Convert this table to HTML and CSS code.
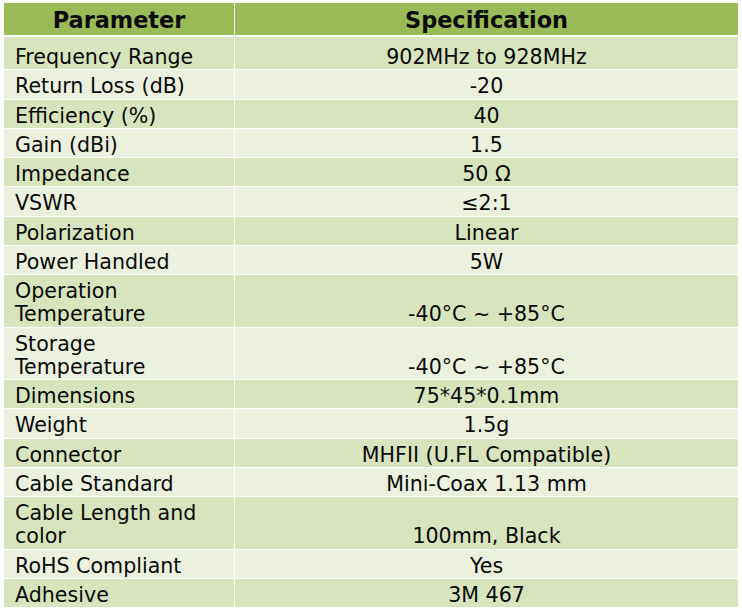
FILE: index.html
```html
<!DOCTYPE html>
<html>
<head>
<meta charset="utf-8">
<link rel="stylesheet" href="styles.css">
</head>
<body>
<table class="spec">
  <thead>
    <tr><th class="col-param">Parameter</th><th class="col-spec">Specification</th></tr>
  </thead>
  <tbody>
    <tr class="first"><td>Frequency Range</td><td>902MHz to 928MHz</td></tr>
    <tr><td>Return Loss (dB)</td><td>-20</td></tr>
    <tr><td>Efficiency (%)</td><td>40</td></tr>
    <tr><td>Gain (dBi)</td><td>1.5</td></tr>
    <tr><td>Impedance</td><td>50 Ω</td></tr>
    <tr><td>VSWR</td><td>≤2:1</td></tr>
    <tr><td>Polarization</td><td>Linear</td></tr>
    <tr><td>Power Handled</td><td>5W</td></tr>
    <tr><td>Operation<br>Temperature</td><td>-40°C ~ +85°C</td></tr>
    <tr><td>Storage<br>Temperature</td><td>-40°C ~ +85°C</td></tr>
    <tr><td>Dimensions</td><td>75*45*0.1mm</td></tr>
    <tr><td>Weight</td><td>1.5g</td></tr>
    <tr><td>Connector</td><td>MHFII (U.FL Compatible)</td></tr>
    <tr><td>Cable Standard</td><td>Mini-Coax 1.13 mm</td></tr>
    <tr><td>Cable Length and<br>color</td><td>100mm, Black</td></tr>
    <tr><td>RoHS Compliant</td><td>Yes</td></tr>
    <tr><td>Adhesive</td><td>3M 467</td></tr>
  </tbody>
</table>
</body>
</html>
```
FILE: styles.css
```css
html, body {
  background: #ffffff;
}
body {
  margin: 3px 0 0 4px;
  font-family: "DejaVu Sans", Verdana, sans-serif;
  color: #0a0a0a;
}
.spec {
  border-collapse: collapse;
  width: 734px;
  table-layout: fixed;
}
.col-param {
  width: 230px;
}
.spec th {
  background: #9bbb59;
  font-size: 22.4px;
  font-weight: bold;
  line-height: 30px;
  height: 30px;
  padding: 2px 0 0;
  text-align: center;
  border-right: 1px solid #ffffff;
  border-bottom: 2px solid #ffffff;
}
.spec td {
  font-size: 20.6px;
  line-height: 23.25px;
  padding: 5px 4px 0 11px;
  vertical-align: bottom;
  border-right: 1px solid #ffffff;
  border-bottom: 1px solid #ffffff;
  white-space: nowrap;
}
.spec td + td {
  text-align: center;
  padding-left: 0;
  padding-right: 0;
}
.spec th:last-child,
.spec td:last-child {
  border-right: none;
}
.spec tbody tr:nth-child(odd) td {
  background: #d7e4bd;
}
.spec tbody tr:nth-child(even) td {
  background: #ebf1de;
}
.spec tr.first td {
  padding-top: 9px;
}
```
